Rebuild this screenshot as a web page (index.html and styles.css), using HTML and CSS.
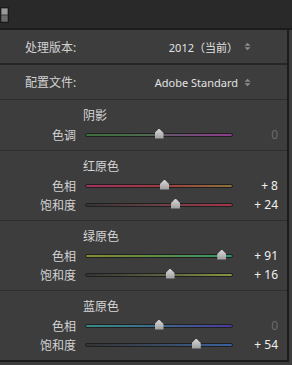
FILE: index.html
```html
<!DOCTYPE html>
<html lang="zh">
<head>
<meta charset="utf-8">
<title>Camera Calibration</title>
<link rel="stylesheet" href="styles.css">
</head>
<body>
<div class="topbar">
  <svg class="toggle" width="10" height="16" viewBox="0 0 10 16">
    <rect x="0.5" y="0.5" width="8" height="15" fill="#3a3a3a" stroke="#1a1a1a"/>
    <rect x="1.5" y="1.5" width="6" height="6" fill="#9a9a9a"/>
    <rect x="1.5" y="8.5" width="6" height="6" fill="#6a6a6a"/>
  </svg>
</div>
<div class="panel">
  <div class="row">
    <span class="rlabel">处理版本:</span>
    <span class="rvalue">2012（当前）</span>
    <svg class="spin" width="7" height="9" viewBox="0 0 7 9"><path d="M0.5 3.8 L3.5 0.8 L6.5 3.8Z M0.5 5.2 L3.5 8.2 L6.5 5.2Z" fill="#8c8c8c"/></svg>
  </div>
  <div class="row">
    <span class="rlabel">配置文件:</span>
    <span class="rvalue">Adobe Standard</span>
    <svg class="spin" width="7" height="9" viewBox="0 0 7 9"><path d="M0.5 3.8 L3.5 0.8 L6.5 3.8Z M0.5 5.2 L3.5 8.2 L6.5 5.2Z" fill="#8c8c8c"/></svg>
  </div>

  <section class="group first">
    <div class="gtitle">阴影</div>
    <div class="srow"><span class="slabel">色调</span><div class="track tint"><span class="thumb" style="--p:0.5"></span></div><span class="sval zero">0</span></div>
  </section>

  <section class="group">
    <div class="gtitle">红原色</div>
    <div class="srow"><span class="slabel">色相</span><div class="track red-hue"><span class="thumb" style="--p:0.54"></span></div><span class="sval">+ 8</span></div>
    <div class="srow"><span class="slabel">饱和度</span><div class="track red-sat"><span class="thumb" style="--p:0.62"></span></div><span class="sval">+ 24</span></div>
  </section>

  <section class="group">
    <div class="gtitle">绿原色</div>
    <div class="srow"><span class="slabel">色相</span><div class="track green-hue"><span class="thumb" style="--p:0.955"></span></div><span class="sval">+ 91</span></div>
    <div class="srow"><span class="slabel">饱和度</span><div class="track green-sat"><span class="thumb" style="--p:0.58"></span></div><span class="sval">+ 16</span></div>
  </section>

  <section class="group last">
    <div class="gtitle">蓝原色</div>
    <div class="srow"><span class="slabel">色相</span><div class="track blue-hue"><span class="thumb" style="--p:0.5"></span></div><span class="sval zero">0</span></div>
    <div class="srow"><span class="slabel">饱和度</span><div class="track blue-sat"><span class="thumb" style="--p:0.77"></span></div><span class="sval">+ 54</span></div>
  </section>
</div>
</body>
</html>
```
FILE: styles.css
```css
html, body {
  margin: 0;
  padding: 0;
}
body {
  background: #3c3c3c;
  width: 292px;
  height: 365px;
  overflow: hidden;
  font-family: "Noto Sans", "Noto Sans CJK SC", sans-serif;
  color: #d2d2d2;
}
.topbar {
  height: 28px;
  background: #292929;
  border-bottom: 2px solid #1c1c1c;
  display: flex;
  align-items: center;
}
.toggle {
  display: block;
  margin-top: 1px;
}
.panel {
  width: 287px;
  border-right: 2px solid #1b1b1b;
  background: #3d3d3d;
}
.row {
  height: 33px;
  display: flex;
  align-items: center;
  padding: 0 36px 0 25px;
  border-bottom: 2px solid #262626;
  font-size: 12px;
}
.row + .row {
  border-bottom: 1px solid #2e2e2e;
  height: 34px;
}
.rlabel {
  color: #d2d2d2;
  flex: 1;
}
.rvalue {
  color: #e2e2e2;
  font-size: 11px;
}
.spin {
  display: block;
  margin-left: 6px;
}
.group {
  padding: 7px 0 6px;
  border-bottom: 1px solid #2f2f2f;
}
.group.first {
  padding-bottom: 6px;
}
.group.last {
  border-bottom: 2px solid #1b1b1b;
  padding-bottom: 6px;
}
.gtitle {
  height: 18px;
  line-height: 18px;
  padding-left: 83px;
  font-size: 12px;
  color: #d6d6d6;
}
.srow {
  height: 19px;
  display: flex;
  align-items: center;
}
.slabel {
  width: 76px;
  text-align: right;
  font-size: 12px;
  color: #d2d2d2;
}
.track {
  position: relative;
  margin-left: 9px;
  width: 146px;
  height: 2px;
  border: 1px solid #202020;
  border-radius: 2px;
}
.sval {
  width: 45px;
  text-align: right;
  font-size: 12px;
  color: #f0f0f0;
}
.sval.zero {
  color: #6c6c6c;
}
.thumb {
  position: absolute;
  top: -5px;
  left: calc(4px + var(--p) * (100% - 8px));
  width: 9px;
  height: 10px;
  margin-left: -4.5px;
  background: linear-gradient(#d8d8d8, #9c9c9c);
  clip-path: polygon(50% 0, 100% 45%, 100% 100%, 0 100%, 0 45%);
}
.tint {
  background: linear-gradient(90deg, #3c6e3c, #4d6a4d 40%, #6a5270 60%, #8d3c8d);
}
.red-hue {
  background: linear-gradient(90deg, #a53060, #a03a45 50%, #8c7238);
}
.red-sat {
  background: linear-gradient(90deg, #343434, #6a4045 50%, #a83448);
}
.green-hue {
  background: linear-gradient(90deg, #8a8a32, #5f8d45 50%, #2f9670);
}
.green-sat {
  background: linear-gradient(90deg, #343434, #5a6040 50%, #8a9440);
}
.blue-hue {
  background: linear-gradient(90deg, #3a8c86, #3c6a8c 50%, #4a3aa0);
}
.blue-sat {
  background: linear-gradient(90deg, #343434, #3a4a60 50%, #3a62a0);
}
```
